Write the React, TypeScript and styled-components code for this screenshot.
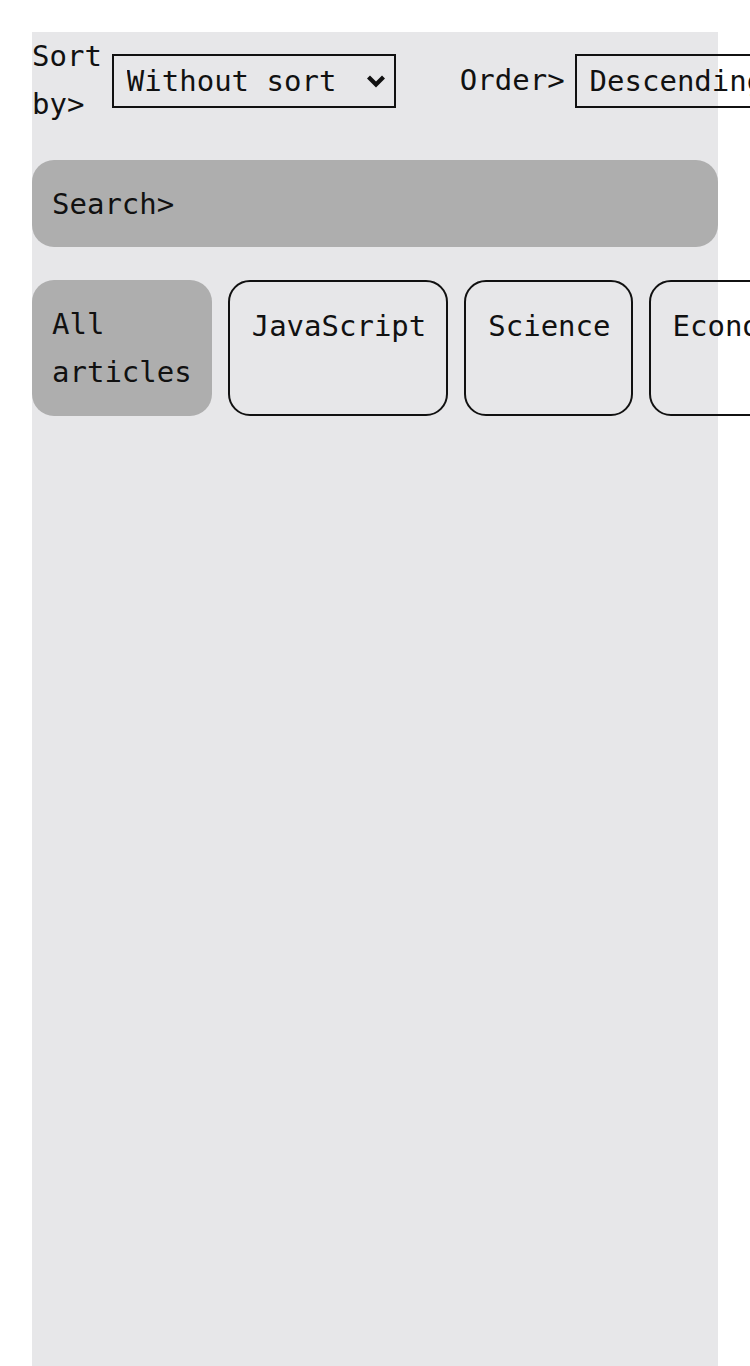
import React from "react";
import styled, { createGlobalStyle } from "styled-components";

const Global = createGlobalStyle`
  html, body { margin: 0; padding: 0; background: #ffffff; }
  body { font-family: "DejaVu Sans Mono", monospace; color: #111111; }
  * { box-sizing: border-box; }
`;

const Page = styled.div`
  height: 100vh;
  padding: 32px 32px 0 32px;
  overflow: hidden;
`;

const Panel = styled.main`
  height: 100%;
  background: #e7e7e9;
  font-family: "DejaVu Sans Mono", monospace;
  font-size: 29px;
  line-height: 48px;
  display: flex;
  flex-direction: column;
  gap: 32px;
`;

const Toolbar = styled.div`
  display: flex;
  align-items: center;
  gap: 64px;
`;

const Field = styled.label`
  display: flex;
  align-items: center;
  gap: 10px;
`;

const FieldLabel = styled.span`
  flex-shrink: 1;
  min-width: 0;
`;

const chevron = encodeURIComponent(
  '<svg xmlns="http://www.w3.org/2000/svg" width="20" height="14" viewBox="0 0 20 14"><path d="M2.5 3 L10 10.5 L17.5 3" fill="none" stroke="#111111" stroke-width="4.2"/></svg>'
);

const Select = styled.select`
  appearance: none;
  -webkit-appearance: none;
  font-family: "DejaVu Sans Mono", monospace;
  font-size: 29px;
  line-height: 34px;
  color: #111111;
  background-color: transparent;
  background-image: url("data:image/svg+xml,${chevron}");
  background-repeat: no-repeat;
  background-position: right 8px center;
  background-size: 20px 14px;
  border: 2px solid #111111;
  border-radius: 0;
  padding: 8px 57px 8px 13px;
  margin-top: 1px;
  flex-shrink: 0;
`;

const SearchBar = styled.div`
  height: 87px;
  border-radius: 22px;
  background: #aeaeae;
  padding: 0 20px;
  display: flex;
  align-items: center;
`;

const Tabs = styled.div`
  display: flex;
  gap: 16px;
  margin-top: 1px;
`;

const Tab = styled.div<{ $active?: boolean }>`
  border-radius: 22px;
  padding: ${(p) => (p.$active ? "20px" : "20px 20px 20px 22px")};
  background: ${(p) => (p.$active ? "#aeaeae" : "transparent")};
  border: ${(p) => (p.$active ? "none" : "2px solid #111111")};
  flex-shrink: 1;
  min-width: min-content;
`;

const categories = ["All articles", "JavaScript", "Science", "Economics"];

export default function App() {
  return (
    <>
      <Global />
      <Page>
        <Panel>
          <Toolbar>
            <Field>
              <FieldLabel>Sort by&gt;</FieldLabel>
              <Select defaultValue="none">
                <option value="none">Without sort</option>
                <option value="date">By date</option>
                <option value="title">By title</option>
              </Select>
            </Field>
            <Field>
              <FieldLabel>Order&gt;</FieldLabel>
              <Select defaultValue="desc">
                <option value="desc">Descending</option>
                <option value="asc">Ascending</option>
              </Select>
            </Field>
          </Toolbar>
          <SearchBar>Search&gt;</SearchBar>
          <Tabs>
            {categories.map((c, i) => (
              <Tab key={c} $active={i === 0}>
                {c}
              </Tab>
            ))}
          </Tabs>
        </Panel>
      </Page>
    </>
  );
}
